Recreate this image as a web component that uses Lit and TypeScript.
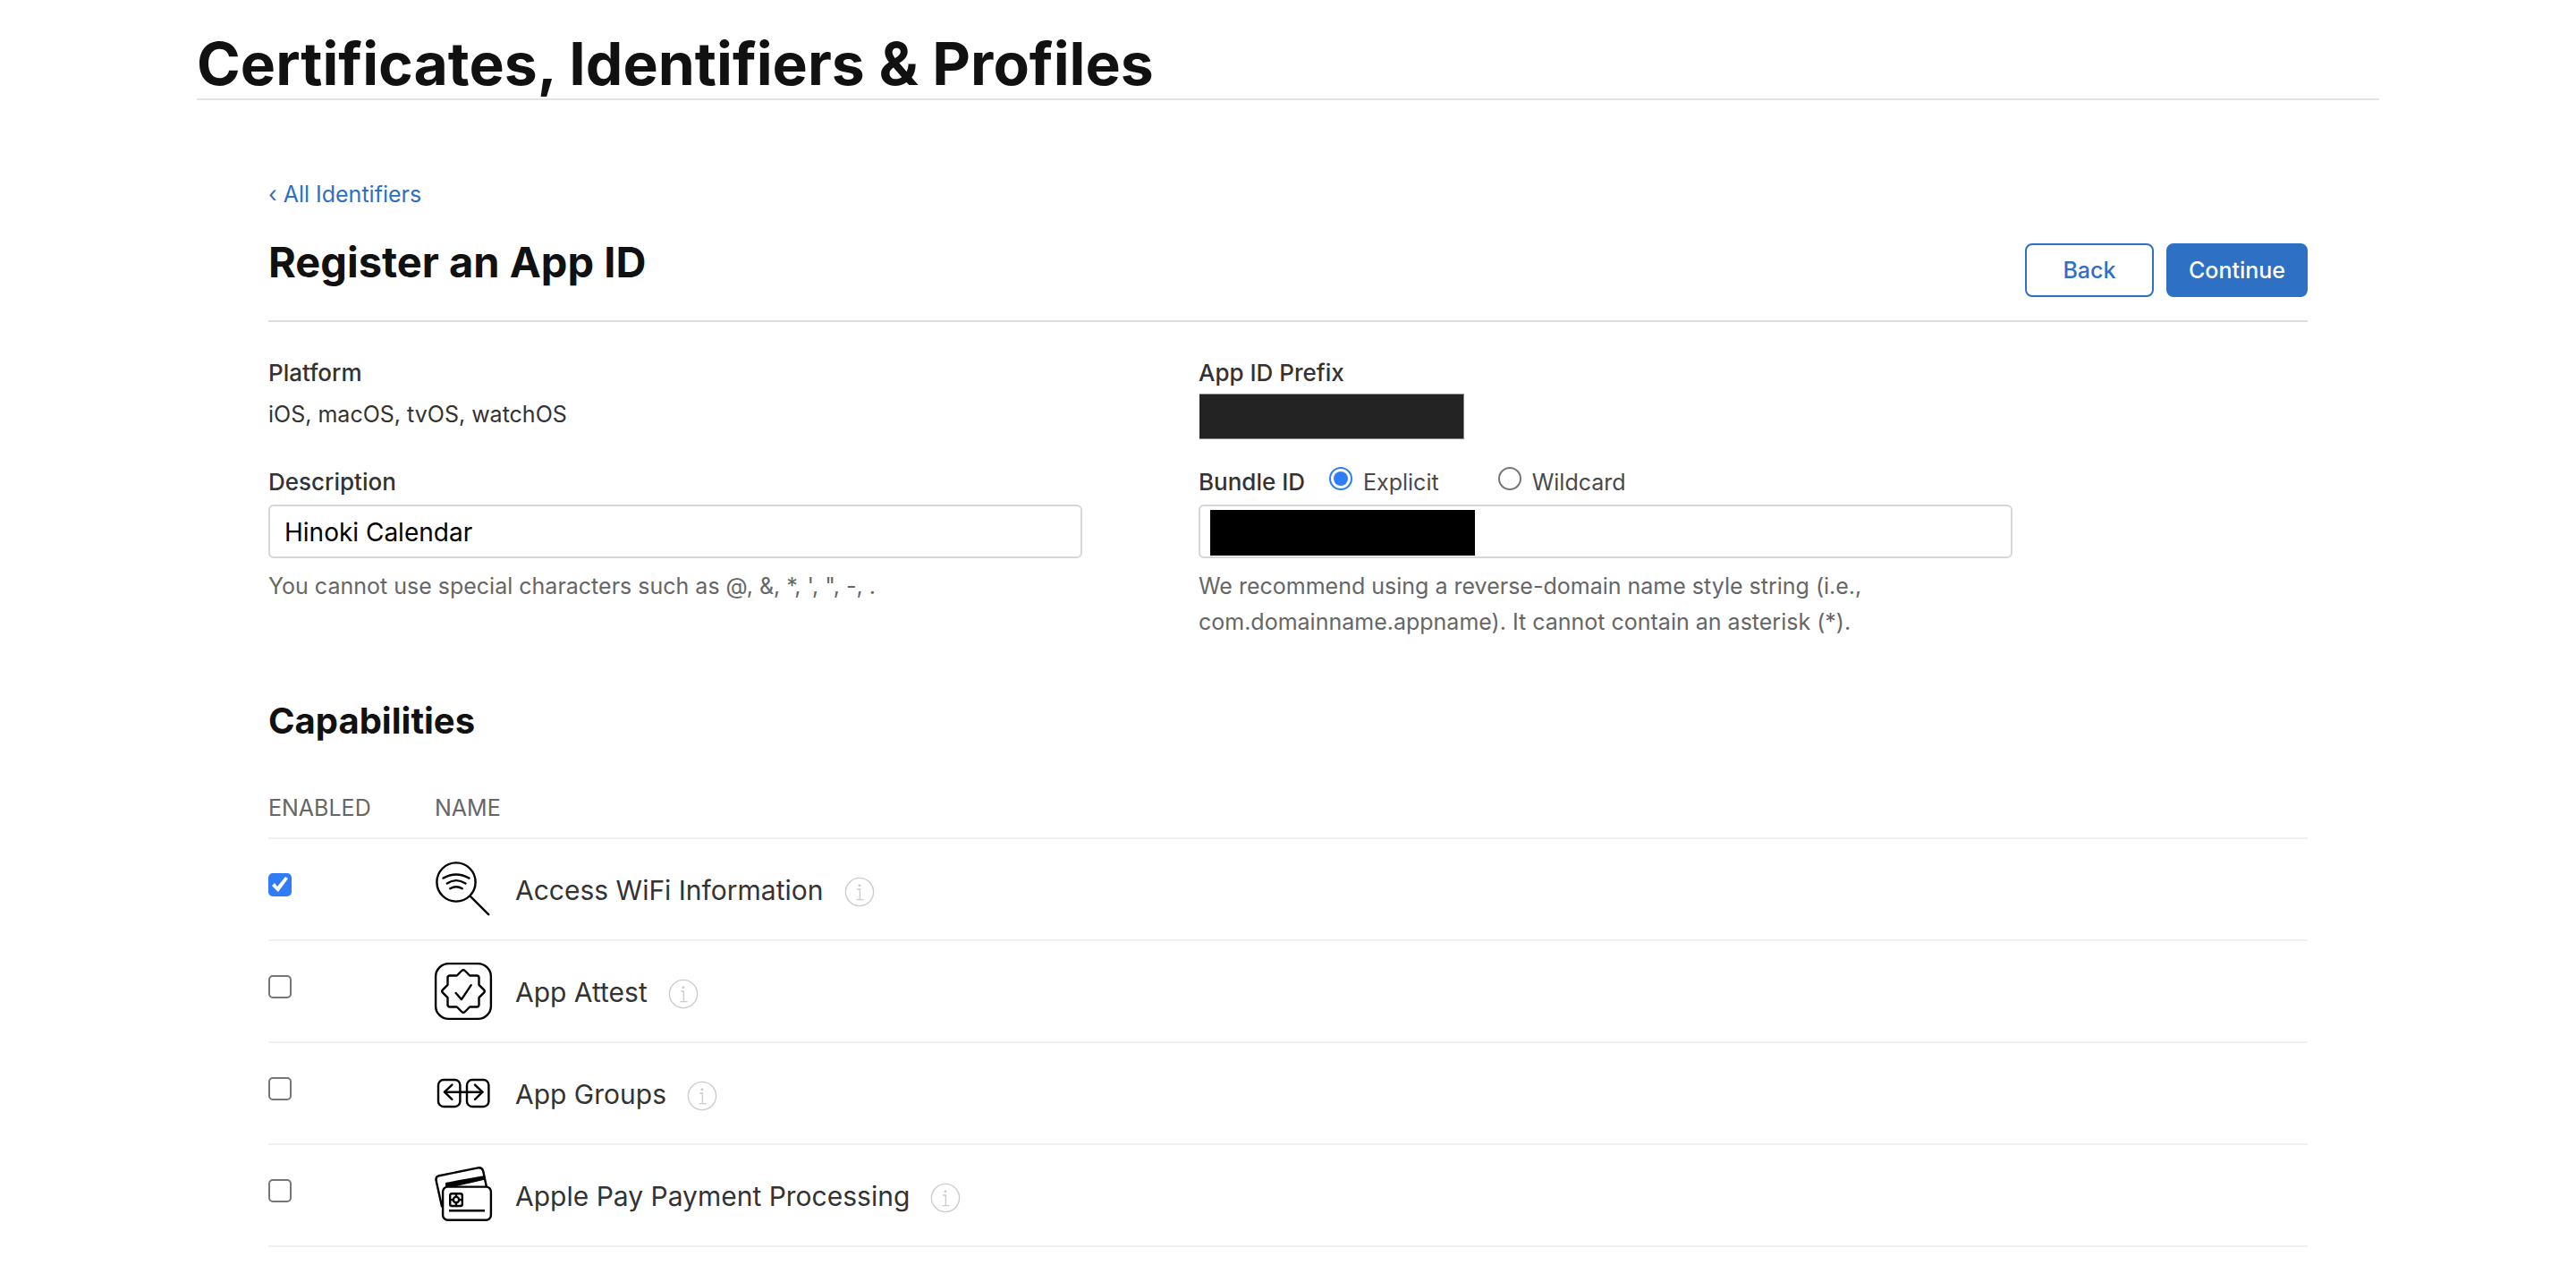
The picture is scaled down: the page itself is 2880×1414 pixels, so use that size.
import { LitElement, html, css, svg, type TemplateResult } from "lit";
import { customElement, property, state } from "lit/decorators.js";

const wifiIcon = svg`
  <circle cx="24" cy="24" r="21.6" />
  <path d="M39.6 39.6 60.2 60.2" />
  <path d="M9.5 19.6Q24 11.4 38.5 19.6" />
  <path d="M13.8 25.5Q24 18.7 34.4 25.5" />
  <path d="M17.2 31.2Q24 27.2 30.8 31.2" />`;

const attestIcon = svg`
  <rect x="1.1" y="1.1" width="61.8" height="61.8" rx="14.5" />
  <path d="M30.3 9 24.8 14.5H17Q14.5 14.5 14.5 17V24.8L9 30.3Q7.3 32 9 33.7L14.5 39.2V47Q14.5 49.5 17 49.5H24.8L30.3 55Q32 56.7 33.7 55L39.2 49.5H47Q49.5 49.5 49.5 47V39.2L55 33.7Q56.7 32 55 30.3L49.5 24.8V17Q49.5 14.5 47 14.5H39.2L33.7 9Q32 7.3 30.3 9Z" />
  <path d="M23.7 34 30 41.2 40.7 25.2" />`;

const groupsIcon = svg`
  <rect x="4" y="17" width="24.4" height="30" rx="6" />
  <rect x="36" y="17" width="24.4" height="30" rx="6" />
  <path d="M11 30.7H53.4" />
  <path d="M19.4 22.6 11 30.7 19.4 38.8" />
  <path d="M45 22.6 53.4 30.7 45 38.8" />`;

const payIcon = svg`
  <path d="M8 44.4 1.6 15.6Q.8 11.2 5 10.2L48.6 1.4Q53 .8 54.2 5L57.8 22" />
  <path class="band" d="M12 17.9 56 10 56.8 14.4 24 22H12Z" />
  <rect class="card" x="9.1" y="22.6" width="53.8" height="37.2" rx="5.5" />
  <rect x="17.2" y="30.2" width="13.6" height="13.8" rx="2" />
  <circle cx="24" cy="37.1" r="3.2" />
  <path d="M24 30.2V33.9M24 40.3V44M17.2 37.1H20.8M27.2 37.1H30.8" />
  <path d="M16 49.3H56" class="rule" />`;

interface Capability {
  id: string;
  name: string;
  enabled: boolean;
  icon: TemplateResult;
}

@customElement("capability-icon")
export class CapabilityIcon extends LitElement {
  @property({ attribute: false }) art?: TemplateResult;

  static styles = css`
    :host {
      display: block;
      flex: none;
    }
    .art {
      display: block;
      width: 64px;
      height: 64px;
      fill: none;
      stroke: #000;
      stroke-width: 2.4;
      stroke-linecap: round;
      stroke-linejoin: round;
      overflow: visible;
    }
    .band {
      fill: #000;
      stroke: none;
    }
    .card {
      fill: #fff;
    }
    .rule {
      stroke-linecap: butt;
    }
  `;

  render() {
    return html`<svg class="art" viewBox="0 0 64 64" aria-hidden="true">${this.art}</svg>`;
  }
}

@customElement("app-root")
export class AppRoot extends LitElement {
  @state() private capabilities: Capability[] = [
    { id: "wifi", name: "Access WiFi Information", enabled: true, icon: wifiIcon },
    { id: "attest", name: "App Attest", enabled: false, icon: attestIcon },
    { id: "groups", name: "App Groups", enabled: false, icon: groupsIcon },
    { id: "pay", name: "Apple Pay Payment Processing", enabled: false, icon: payIcon },
  ];

  static styles = css`
    :host {
      display: block;
      background: #fff;
      color: #333;
      font-family: Inter, "Liberation Sans", sans-serif;
      font-size: 25px;
      line-height: 40px;
    }
    * {
      box-sizing: border-box;
    }
    .page {
      margin: 0 220px;
    }
    .title {
      margin: 0;
      padding-top: 32px;
      border-bottom: 2px solid #e3e3e3;
      color: #111;
      font-size: 66px;
      font-weight: 700;
      line-height: 78px;
    }
    .content {
      padding: 85px 80px 20px;
    }
    .crumb {
      display: block;
      width: fit-content;
      color: #2d70c4;
      text-decoration: none;
    }
    .bar {
      display: flex;
      justify-content: space-between;
      margin-top: 27px;
      padding-bottom: 26px;
      border-bottom: 2px solid #ddd;
    }
    .heading {
      margin: 0;
      color: #111;
      font-size: 47px;
      font-weight: 700;
      line-height: 58px;
    }
    .actions {
      display: flex;
      gap: 14px;
      padding-top: 8px;
    }
    .button {
      min-width: 144px;
      height: 60px;
      padding: 0 23px;
      border: 2px solid #2d70c4;
      border-radius: 8px;
      background: #fff;
      color: #2d70c4;
      font: inherit;
      font-weight: 500;
      line-height: 56px;
    }
    .primary {
      background: #2d70c4;
      color: #fff;
    }
    .fields {
      display: grid;
      grid-template-columns: 1fr 1fr;
      row-gap: 28px;
      margin-top: 37px;
      padding-right: 200px;
    }
    .field {
      padding-right: 130px;
    }
    .label {
      display: block;
      font-size: 26px;
      font-weight: 500;
    }
    .value {
      margin-top: 6px;
    }
    .redacted {
      width: 296px;
      height: 51px;
      background: #232323;
    }
    .prefix {
      margin-top: 3px;
      margin-left: 1px;
      border: 1px solid #8a8a8a;
      border-left: 0;
    }
    .label-row {
      display: flex;
      align-items: flex-start;
    }
    .option {
      display: flex;
      gap: 12px;
      margin-left: 27px;
      color: #494949;
    }
    .option + .option {
      margin-left: 66px;
    }
    .radio,
    .check {
      flex: none;
      display: grid;
      place-items: center;
      width: 26px;
      height: 26px;
      margin: 0;
      border: 2px solid #767676;
      background: #fff;
      appearance: none;
    }
    .radio {
      margin-top: 3px;
      border-radius: 50%;
    }
    .radio:checked {
      border-color: #2f7cf6;
    }
    .radio:checked::before {
      content: "";
      width: 16px;
      height: 16px;
      border-radius: 50%;
      background: #2f7cf6;
    }
    .check {
      border-radius: 5px;
    }
    .check:checked {
      border: 0;
      background: #2f7cf6;
    }
    .check:checked::before {
      content: "";
      width: 26px;
      height: 26px;
      background: #fff;
      clip-path: polygon(4px 14px, 7px 11px, 10px 15px, 19px 4px, 22px 6px, 11px 21px);
    }
    .box {
      position: relative;
      margin-top: 5px;
    }
    .input {
      display: block;
      width: 100%;
      height: 60px;
      padding: 2px 16px 0;
      border: 2px solid #d6d6d6;
      border-radius: 6px;
      background: #fff;
      color: #000;
      font: inherit;
      font-size: 28px;
    }
    .cover {
      position: absolute;
      top: 6px;
      left: 13px;
      background: #000;
    }
    .hint {
      margin: 11px 0 0;
      color: #666;
    }
    .subheading {
      margin: 67px 0 0;
      color: #111;
      font-size: 40px;
      font-weight: 700;
      line-height: 48px;
    }
    .table {
      width: 100%;
      margin-top: 53px;
      border-collapse: collapse;
      border-spacing: 0;
      text-align: left;
    }
    .table th,
    .table td {
      padding: 0;
      border-bottom: 2px solid #f0f0f0;
    }
    .table th {
      padding-bottom: 13px;
      color: #666;
      font-weight: 400;
    }
    .table .enabled {
      width: 186px;
    }
    .table .toggle {
      padding-top: 38px;
      vertical-align: top;
    }
    .name {
      display: flex;
      align-items: center;
      padding: 24px 0;
      font-size: 30px;
    }
    .name-label {
      margin: 2px 0 0 26px;
    }
    .info {
      width: 32px;
      height: 32px;
      margin: 6px 0 0 24px;
      padding: 0;
      border: 0;
      background: none;
    }
    .info-art {
      display: block;
      width: 32px;
      height: 32px;
      fill: none;
      stroke: #ccc;
      stroke-width: 1.4;
      overflow: visible;
    }
    .dot {
      fill: #ccc;
      stroke: none;
    }
  `;

  private toggle(id: string) {
    this.capabilities = this.capabilities.map((c) =>
      c.id === id ? { ...c, enabled: !c.enabled } : c,
    );
  }

  private row(c: Capability) {
    return html`<tr>
      <td class="toggle">
        <input
          class="check"
          type="checkbox"
          id=${c.id}
          .checked=${c.enabled}
          @change=${() => this.toggle(c.id)}
        />
      </td>
      <td>
        <div class="name">
          <capability-icon .art=${c.icon}></capability-icon>
          <label class="name-label" for=${c.id}>${c.name}</label>
          <button class="info" type="button" aria-label="About ${c.name}">
            <svg class="info-art" viewBox="0 0 32 32" aria-hidden="true">
              <circle cx="16" cy="16" r="15.6" />
              <circle class="dot" cx="16" cy="8.7" r="1.5" />
              <path d="M13.2 13H16.4V24.6M12.5 24.6H20.6" />
            </svg>
          </button>
        </div>
      </td>
    </tr>`;
  }

  render() {
    return html`<main class="page">
      <h1 class="title">Certificates, Identifiers &amp; Profiles</h1>
      <div class="content">
        <a class="crumb" href="#identifiers">‹ All Identifiers</a>
        <div class="bar">
          <h2 class="heading">Register an App ID</h2>
          <div class="actions">
            <button class="button" type="button">Back</button>
            <button class="button primary" type="button">Continue</button>
          </div>
        </div>
        <form class="fields">
          <div class="field">
            <div class="label">Platform</div>
            <div class="value">iOS, macOS, tvOS, watchOS</div>
          </div>
          <div class="field">
            <div class="label">App ID Prefix</div>
            <div class="redacted prefix"></div>
          </div>
          <div class="field">
            <label class="label" for="description">Description</label>
            <div class="box">
              <input class="input" id="description" type="text" value="Hinoki Calendar" />
            </div>
            <p class="hint">You cannot use special characters such as @, &amp;, *, ', ", -, .</p>
          </div>
          <div class="field">
            <div class="label-row">
              <label class="label" for="bundle">Bundle ID</label>
              <label class="option">
                <input class="radio" type="radio" name="kind" value="explicit" checked />Explicit
              </label>
              <label class="option">
                <input class="radio" type="radio" name="kind" value="wildcard" />Wildcard
              </label>
            </div>
            <div class="box">
              <input class="input" id="bundle" type="text" />
              <div class="redacted cover"></div>
            </div>
            <p class="hint">
              We recommend using a reverse-domain name style string (i.e.,
              com.domainname.appname). It cannot contain an asterisk (*).
            </p>
          </div>
        </form>
        <h3 class="subheading">Capabilities</h3>
        <table class="table">
          <thead>
            <tr>
              <th class="enabled" scope="col">ENABLED</th>
              <th scope="col">NAME</th>
            </tr>
          </thead>
          <tbody>
            ${this.capabilities.map((c) => this.row(c))}
          </tbody>
        </table>
      </div>
    </main>`;
  }
}
